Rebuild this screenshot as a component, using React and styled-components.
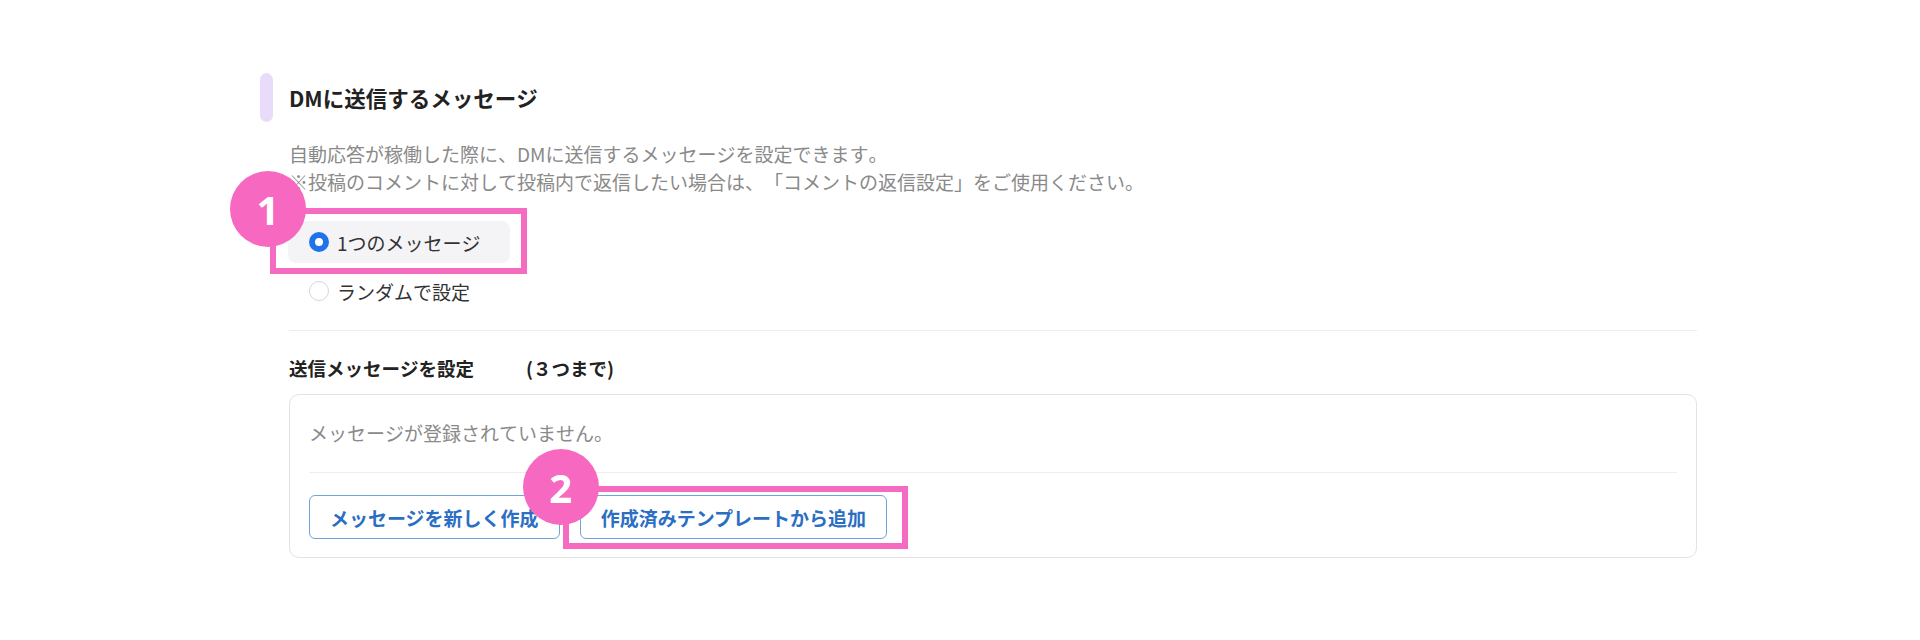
import styled, { createGlobalStyle } from 'styled-components';

const GlobalStyle = createGlobalStyle`
    body {
        margin: 0;
        background: #fff;
        font-family: "Noto Sans CJK JP", "Noto Sans", sans-serif;
        color: #222;
        text-spacing-trim: space-all;
        font-kerning: none;
    }
`;

const App = () => {
    return (
        <Page>
            <GlobalStyle />
            <Header>
                <AccentBar />
                <Title>DMに送信するメッセージ</Title>
            </Header>

            <Body>
                <Description>
                    自動応答が稼働した際に、DMに送信するメッセージを設定できます。
                    <br />
                    ※投稿のコメントに対して投稿内で返信したい場合は、「コメントの返信設定」をご使用ください。
                </Description>

                <Options>
                    <Highlight>
                        <Option $selected>
                            <Radio $selected />
                            1つのメッセージ
                        </Option>
                        <Frame $inset="-13px -17px -11px -19px" />
                        <Badge $left={-59} $top={-50}>1</Badge>
                    </Highlight>
                    <Option>
                        <Radio />
                        ランダムで設定
                    </Option>
                </Options>

                <Divider />

                <SubTitle>
                    送信メッセージを設定
                    <Limit>(３つまで)</Limit>
                </SubTitle>

                <Card>
                    <Empty>メッセージが登録されていません。</Empty>
                    <CardDivider />
                    <Actions>
                        <ActionButton>メッセージを新しく作成</ActionButton>
                        <Highlight>
                            <ActionButton>作成済みテンプレートから追加</ActionButton>
                            <Frame $inset="-9px -21px -10px -17px" />
                            <Badge $left={-57} $top={-46}>2</Badge>
                        </Highlight>
                    </Actions>
                </Card>
            </Body>
        </Page>
    );
};

const Page = styled.div`
    width: 1437px;
    padding: 73px 0 0 260px;
`;

const Header = styled.div`
    display: flex;
    align-items: center;
    gap: 16px;
`;

const AccentBar = styled.div`
    width: 13px;
    height: 49px;
    border-radius: 7px;
    background-color: #e9dcfa;
`;

const Title = styled.h2`
    margin: 0;
    font-size: 21.5px;
    font-weight: 700;
    line-height: 1.3;
    color: #222;
`;

const Body = styled.div`
    padding-left: 29px;
`;

const Description = styled.p`
    margin: 18px 0 0;
    font-size: 19px;
    line-height: 27.5px;
    color: #8a8a8a;
`;

const Options = styled.div`
    display: flex;
    flex-direction: column;
    align-items: flex-start;
    gap: 7px;
    margin-top: 26px;
`;

const Option = styled.label`
    display: flex;
    align-items: center;
    gap: 8px;
    box-sizing: border-box;
    width: 222px;
    height: 42px;
    margin-left: -1px;
    padding-left: 21px;
    border-radius: 8px;
    background-color: ${(p) => (p.$selected ? '#f4f4f6' : 'transparent')};
    font-size: 19px;
    color: #333;
`;

const Radio = styled.span`
    flex: none;
    box-sizing: border-box;
    width: 20px;
    height: 20px;
    border-radius: 50%;
    background-color: #fff;
    border: ${(p) => (p.$selected ? '6.5px solid #1f73ea' : '1.5px solid #d6d6d6')};
`;

const Highlight = styled.div`
    position: relative;
    display: flex;
`;

const Frame = styled.div`
    position: absolute;
    inset: ${(p) => p.$inset};
    border: 6px solid #f46bc1;
    pointer-events: none;
    z-index: 2;
`;

const Badge = styled.span`
    position: absolute;
    left: ${(p) => p.$left}px;
    top: ${(p) => p.$top}px;
    z-index: 3;
    width: 76px;
    height: 76px;
    border-radius: 50%;
    background-color: #f768c0;
    color: #fff;
    font-family: "Noto Sans", "Open Sans", sans-serif;
    font-size: 40px;
    font-weight: 700;
    display: flex;
    align-items: center;
    justify-content: center;
`;

const Divider = styled.hr`
    margin: 18px 0 0;
    border: none;
    border-top: 1px solid #ececec;
`;

const SubTitle = styled.h3`
    margin: 24px 0 0;
    font-size: 18.5px;
    font-weight: 700;
    line-height: 27px;
    color: #222;
`;

const Limit = styled.span`
    margin-left: 52px;
`;

const Card = styled.div`
    margin-top: 12px;
    border: 1px solid #e3e3e3;
    border-radius: 10px;
    padding: 24px 19px 18px;
`;

const Empty = styled.p`
    margin: 0;
    font-size: 19px;
    line-height: 27px;
    color: #8a8a8a;
`;

const CardDivider = styled.div`
    margin-top: 26px;
    border-top: 1px solid #eeeeee;
`;

const Actions = styled.div`
    display: flex;
    gap: 20px;
    margin-top: 22px;
`;

const ActionButton = styled.button`
    height: 44px;
    padding: 0 20px;
    border: 1px solid #6ea3de;
    border-radius: 6px;
    background-color: #fff;
    color: #2b6ec4;
    font-family: "Noto Sans CJK JP", sans-serif;
    font-size: 19px;
    font-weight: 700;
    cursor: pointer;
`;

export default App;
